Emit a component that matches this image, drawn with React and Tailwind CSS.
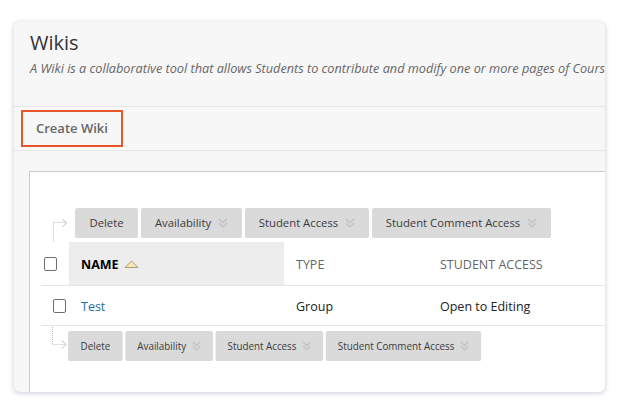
import React from "react";

function Chevrons({ size = 10 }) {
  return (
    <svg width={size} height={size} viewBox="0 0 10 10" fill="none" className="shrink-0">
      <path d="M1 1 L5 4.6 L9 1" stroke="#c6c6c6" strokeWidth="1.7" />
      <path d="M1 5.2 L5 8.8 L9 5.2" stroke="#c6c6c6" strokeWidth="1.7" />
    </svg>
  );
}

function Checkbox() {
  return <div className="w-[13px] h-[14px] rounded-[2px] border border-[#6f6f6f] bg-white shrink-0" />;
}

function Buttons({ className = "" }) {
  return (
    <div className={"flex gap-[3px] text-[11.3px] text-[#3a3a3a] " + className}>
      <div className="w-[63px] h-[30px] bg-[#dadada] rounded-[2px] flex items-center justify-center">Delete</div>
      <div className="w-[101px] h-[30px] bg-[#dadada] rounded-[2px] flex items-center justify-center gap-[7px]">
        <span>Availability</span>
        <Chevrons />
      </div>
      <div className="w-[124px] h-[30px] bg-[#dadada] rounded-[2px] flex items-center justify-center gap-[7px]">
        <span>Student Access</span>
        <Chevrons />
      </div>
      <div className="w-[179px] h-[30px] bg-[#dadada] rounded-[2px] flex items-center justify-center gap-[7px]">
        <span>Student Comment Access</span>
        <Chevrons />
      </div>
    </div>
  );
}

function TopBar() {
  return (
    <div className="flex h-[30px] items-start pl-[20px] mt-[36px]">
      <svg width="25" height="34" viewBox="0 0 25 34" fill="none" className="shrink-0 overflow-visible">
        <path d="M3.5 14.5 V34" stroke="#bdbdbd" strokeDasharray="1 1" />
        <path d="M3.5 14.5 H16" stroke="#bdbdbd" strokeDasharray="1 1" />
        <path d="M12.5 11 L16.5 15 L12.5 19" stroke="#bdbdbd" strokeWidth="1" />
      </svg>
      <Buttons />
    </div>
  );
}

function BottomBar() {
  return (
    <div className="flex h-[30px] items-start pl-[18px] mt-[5px]">
      <svg width="20" height="22" viewBox="0 0 20 22" fill="none" className="shrink-0 -mt-[4px]">
        <path d="M4.5 0 V17.5" stroke="#bdbdbd" strokeDasharray="1 1" />
        <path d="M4.5 17.5 H17" stroke="#bdbdbd" strokeDasharray="1 1" />
        <path d="M14 13.5 L18 17.5 L14 21.5" stroke="#bdbdbd" strokeWidth="1" />
      </svg>
      <Buttons className="origin-left scale-x-[0.868]" />
    </div>
  );
}

export default function App() {
  return (
    <div className="w-[620px] h-[420px] bg-white pt-[22px] pl-[14px] font-['Open_Sans',sans-serif]">
      <div className="w-[591px] h-[370px] rounded-[6px] bg-[#f7f7f7] overflow-hidden flex flex-col shadow-[0_1px_4px_1px_rgba(100,100,150,0.25)]">
        <div className="h-[85px] shrink-0 border-b border-[#e6e6e6] pl-[16px] pt-[7px]">
          <div className="text-[20px] leading-[28px] text-[#333333]">Wikis</div>
          <div className="mt-[2px] text-[12.7px] leading-[18px] italic text-[#666666] whitespace-nowrap">
            A Wiki is a collaborative tool that allows Students to contribute and modify one or more pages of Course-related materials.
          </div>
        </div>
        <div className="h-[44px] shrink-0 border-b border-[#e6e6e6] pl-[7px] pt-[3px]">
          <div className="inline-flex h-[37px] items-center border-2 border-[#e9552b] px-[13px] text-[13px] font-semibold text-[#666666]">
            Create Wiki
          </div>
        </div>
        <div className="h-[20px] shrink-0" />
        <div className="flex-1 ml-[15px] w-[620px] bg-white border-t border-l border-[#cccccc]">
          <TopBar />
          <div className="ml-[11px] mt-[4px] text-[12.5px]">
            <div className="flex h-[44px] border-b border-[#e6e6e6]">
              <div className="w-[28px] flex items-center pl-[3px]">
                <Checkbox />
              </div>
              <div className="w-[215px] bg-[#ededed] flex items-center pl-[12px] pt-[3px] gap-[5px]">
                <span className="font-bold text-black">NAME</span>
                <svg width="15" height="8" viewBox="0 0 15 8" fill="none" className="-mt-[2px]">
                  <path d="M1 7.5 L7.5 1 L14 7.5 Z" fill="#f8e7ad" stroke="#a89c80" strokeWidth="1" />
                </svg>
              </div>
              <div className="w-[144px] flex items-center pl-[12px] pt-[3px] text-[#666666]">TYPE</div>
              <div className="flex items-center pl-[12px] pt-[3px] text-[#666666]">STUDENT ACCESS</div>
            </div>
            <div className="flex h-[40px] border-b border-[#e6e6e6] text-[#222222]">
              <div className="w-[28px] flex items-center pl-[12px]">
                <Checkbox />
              </div>
              <div className="w-[215px] flex items-center pl-[12px] pt-[3px] text-[#1f6e9e]">Test</div>
              <div className="w-[144px] flex items-center pl-[12px] pt-[3px]">Group</div>
              <div className="flex items-center pl-[12px] pt-[3px]">Open to Editing</div>
            </div>
          </div>
          <BottomBar />
        </div>
      </div>
    </div>
  );
}
